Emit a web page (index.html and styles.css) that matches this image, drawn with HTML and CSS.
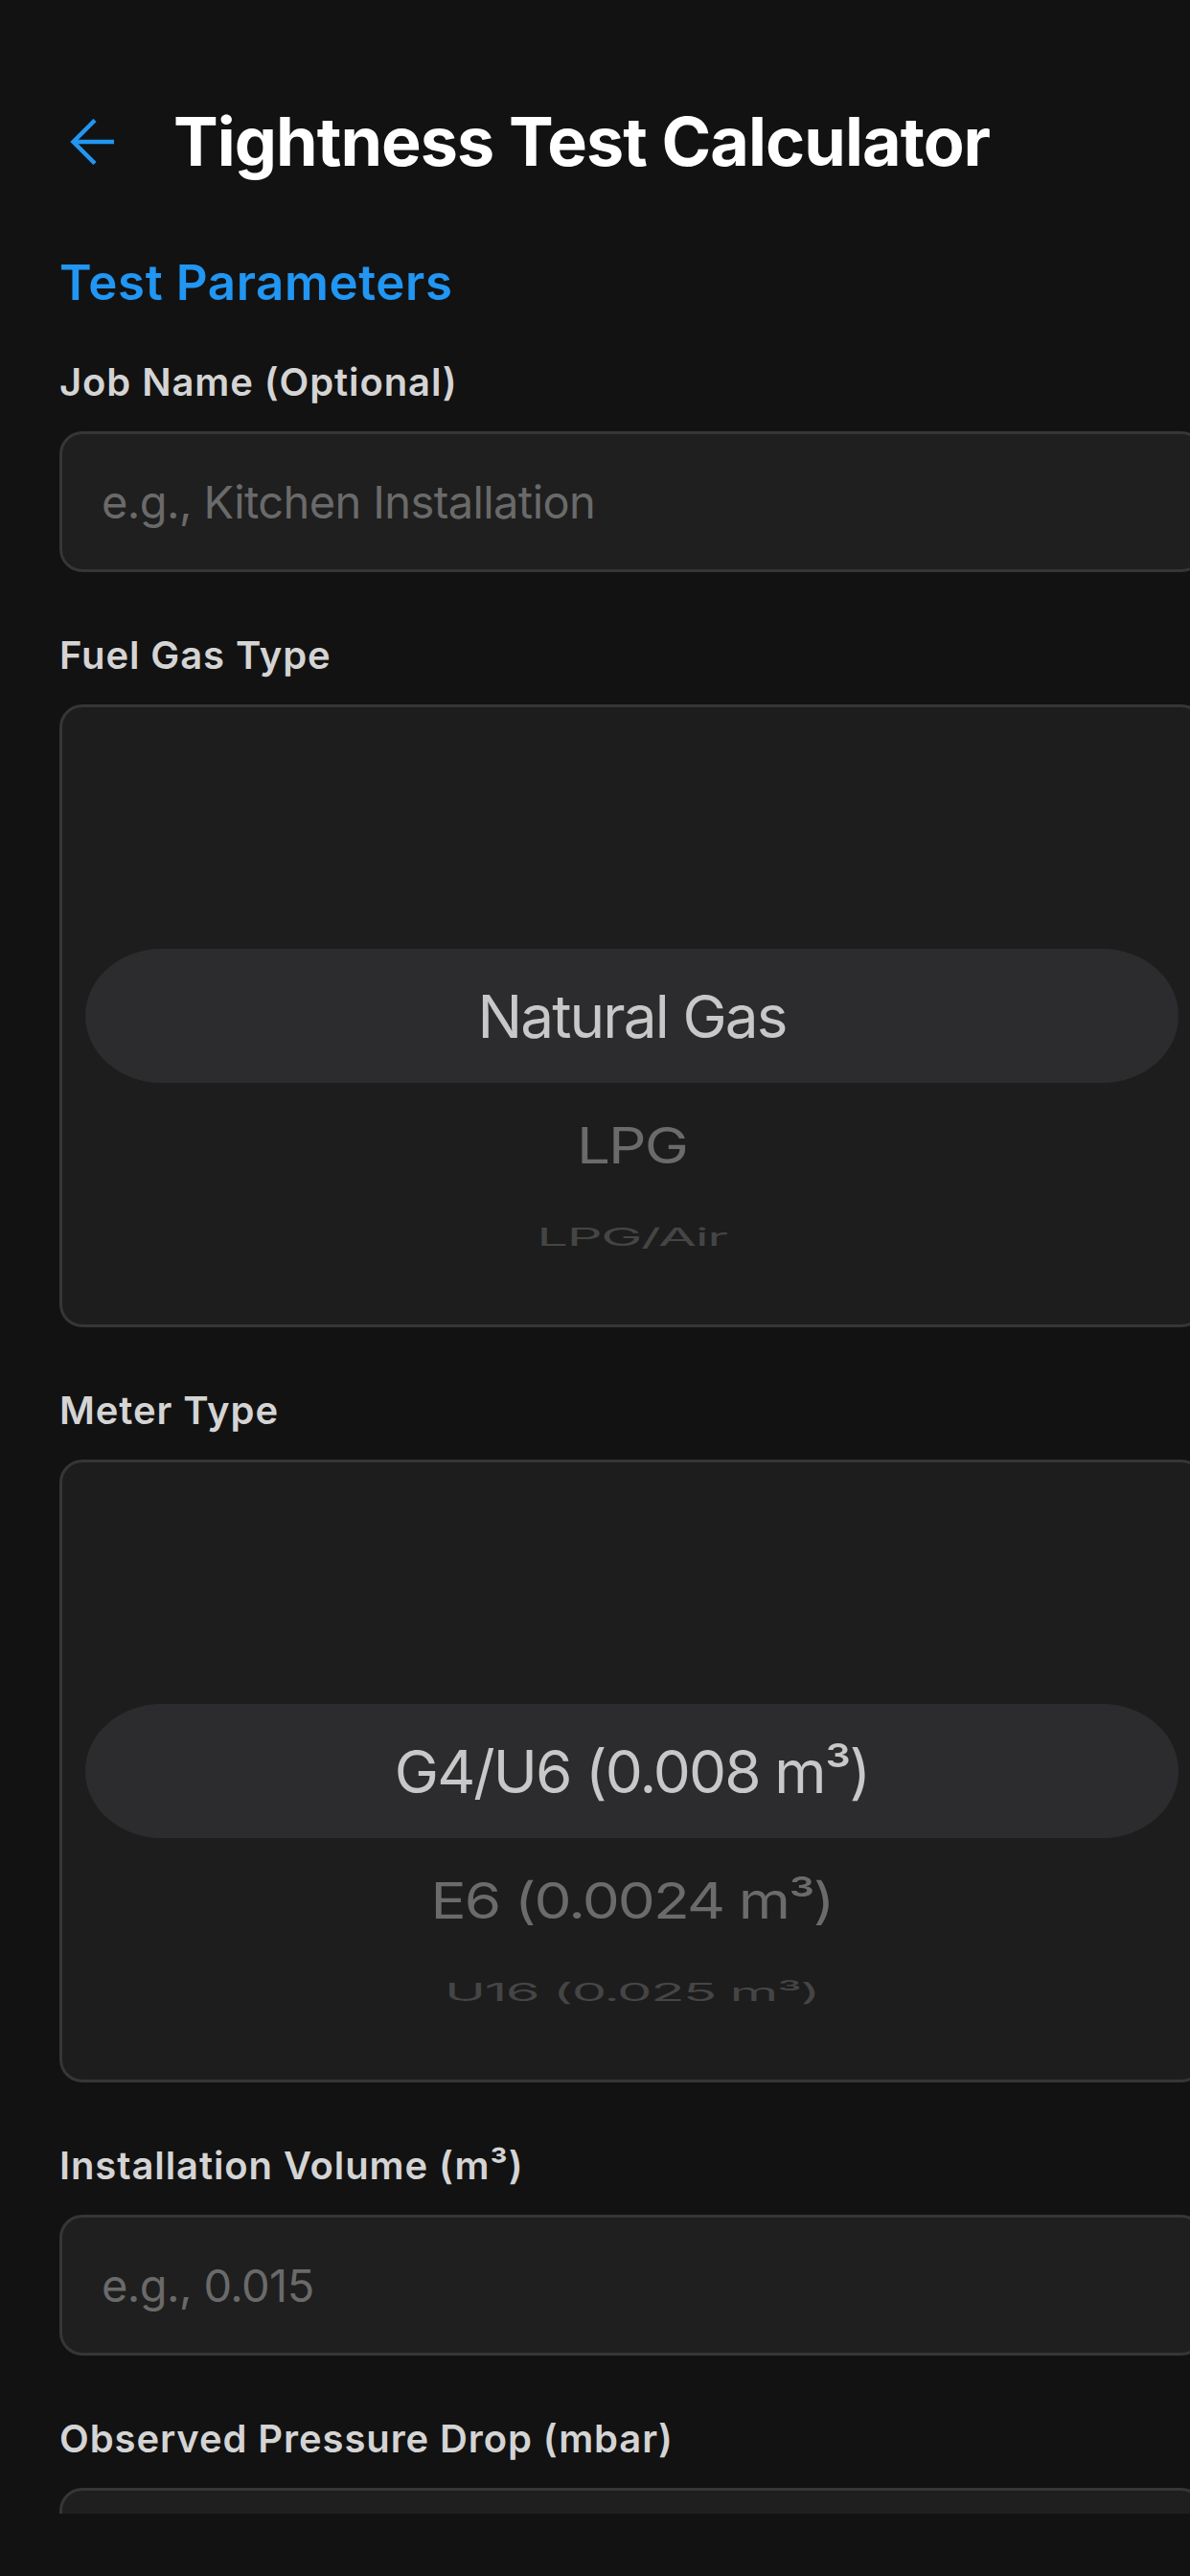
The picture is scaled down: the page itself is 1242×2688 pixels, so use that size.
FILE: index.html
```html
<!DOCTYPE html>
<html lang="en">
<head>
<meta charset="utf-8">
<title>Tightness Test Calculator</title>
<link rel="stylesheet" href="styles.css">
</head>
<body>
<div class="scroll">
  <header class="topbar">
    <svg class="back" viewBox="0 0 48 48" aria-label="Back">
      <path d="M47 24H4" />
      <path d="M27 1.5L4.5 24L27 46.5" />
    </svg>
    <h1 class="title">Tightness Test Calculator</h1>
  </header>

  <main class="form">
    <h2 class="section">Test Parameters</h2>

    <div class="field field-first">
      <label class="label">Job Name (Optional)</label>
      <input class="input" type="text" placeholder="e.g., Kitchen Installation">
    </div>

    <div class="field">
      <label class="label">Fuel Gas Type</label>
      <div class="picker">
        <div class="opt opt-sel"><span>Natural Gas</span></div>
        <div class="opt opt-near"><span>LPG</span></div>
        <div class="opt opt-far"><span>LPG/Air</span></div>
      </div>
    </div>

    <div class="field">
      <label class="label">Meter Type</label>
      <div class="picker">
        <div class="opt opt-sel"><span>G4/U6 (0.008 m³)</span></div>
        <div class="opt opt-near"><span>E6 (0.0024 m³)</span></div>
        <div class="opt opt-far"><span>U16 (0.025 m³)</span></div>
      </div>
    </div>

    <div class="field">
      <label class="label">Installation Volume (m³)</label>
      <input class="input" type="text" placeholder="e.g., 0.015">
    </div>

    <div class="field">
      <label class="label">Observed Pressure Drop (mbar)</label>
      <input class="input" type="text">
    </div>
  </main>
</div>
</body>
</html>
```

FILE: styles.css
```css
html, body {
  margin: 0;
  padding: 0;
  background: #121212;
}

body {
  width: 1242px;
  height: 2688px;
  overflow: hidden;
  font-family: Inter, "Noto Sans", "Liberation Sans", sans-serif;
}

.scroll {
  height: 2623px;
  overflow: hidden;
}

.topbar {
  display: flex;
  align-items: center;
  height: 84px;
  padding: 106px 0 0 72px;
}

.back {
  width: 48px;
  height: 48px;
  flex: none;
  fill: none;
  stroke: #2196f3;
  stroke-width: 4.5;
  stroke-linecap: butt;
  stroke-linejoin: miter;
}

.title {
  margin: 0 0 0 61px;
  font-size: 70px;
  font-weight: 700;
  line-height: 84px;
  letter-spacing: -0.95px;
  color: #ffffff;
  white-space: nowrap;
}

.form {
  width: 1195px;
  padding-left: 62px;
}

.section {
  margin: 75px 0 0;
  font-size: 51px;
  font-weight: 600;
  line-height: 60px;
  letter-spacing: 0.6px;
  color: #2196f3;
}

.field {
  display: flex;
  flex-direction: column;
  gap: 29px;
  margin-top: 65px;
}

.field-first {
  margin-top: 52px;
}

.label {
  font-size: 40px;
  font-weight: 600;
  line-height: 44px;
  letter-spacing: 0.9px;
  color: #d4d4d4;
}

.input {
  box-sizing: border-box;
  display: block;
  width: 1195px;
  height: 147px;
  margin: 0;
  padding: 0 0 0 41px;
  border: 3px solid #363636;
  border-radius: 24px;
  background: #1f1f1f;
  font-family: Inter, "Noto Sans", sans-serif;
  font-size: 47px;
  font-weight: 400;
  letter-spacing: -0.6px;
  color: #dddddd;
  outline: none;
}

.input::placeholder {
  color: #6a6a6a;
  opacity: 1;
}

.picker {
  box-sizing: border-box;
  display: flex;
  flex-direction: column;
  height: 650px;
  padding: 252px 24px 0;
  border: 3px solid #363636;
  border-radius: 24px;
  background: #1d1d1d;
  overflow: hidden;
}

.opt {
  display: flex;
  align-items: center;
  justify-content: center;
  flex: none;
  font-size: 62px;
  font-weight: 400;
  letter-spacing: -1.9px;
  white-space: nowrap;
}

.opt span {
  display: inline-block;
}

.opt-sel {
  height: 140px;
  border-radius: 80px / 70px;
  background: #2c2c2e;
  color: #c8c8c8;
}

.opt-near {
  height: 130px;
  color: #6b6b6b;
}

.opt-near span {
  transform: scaleY(0.84);
}

.opt-far {
  height: 62px;
  font-size: 58px;
  letter-spacing: -1.5px;
  color: #454545;
}

.opt-far span {
  transform: scaleY(0.44);
}
```
